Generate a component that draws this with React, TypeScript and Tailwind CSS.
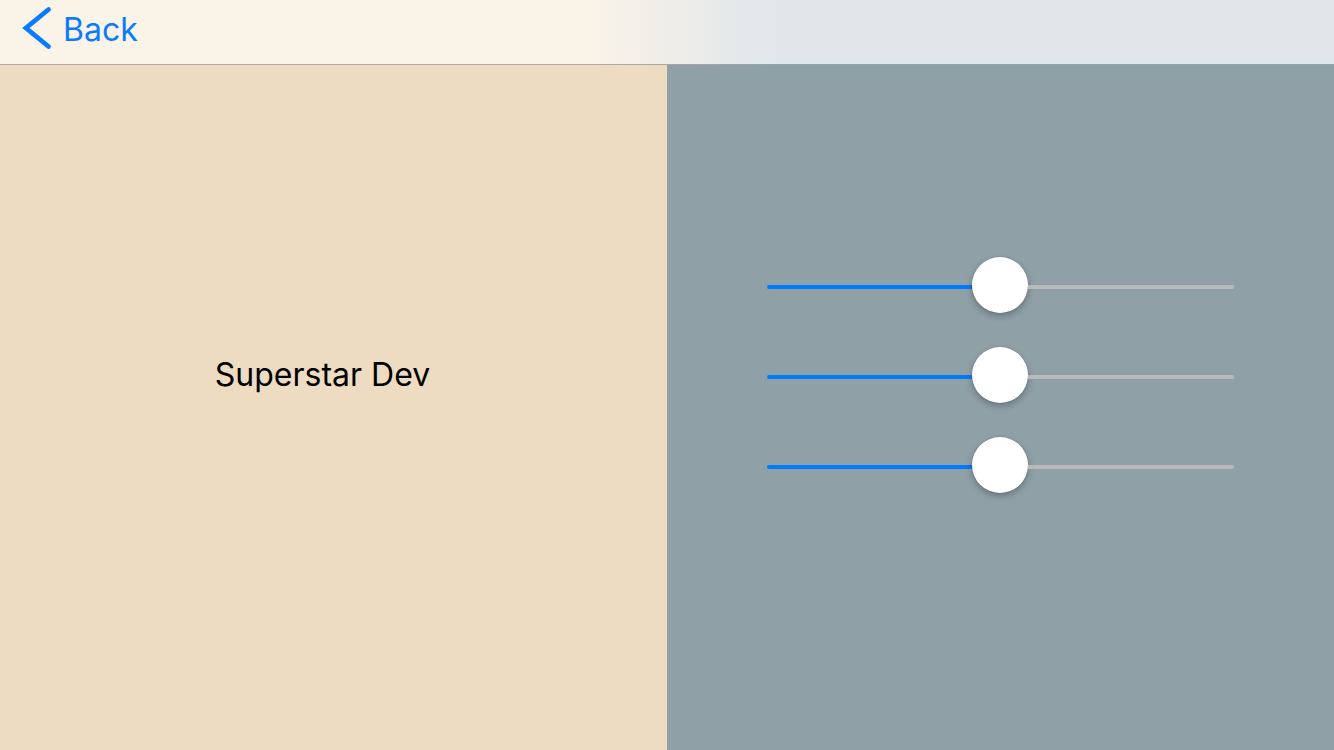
import React from "react";

function Slider({ value }: { value: number }) {
  const trackWidth = 467;
  const thumb = 56;
  const filled = Math.round((trackWidth - thumb) * value) - 1;

  return (
    <div className="flex h-14 w-[467px] items-center">
      <div
        className="mt-[3px] h-[4px] shrink-0 rounded-l-full bg-[#007aff]"
        style={{ width: filled }}
      />
      <div className="h-14 w-14 shrink-0 rounded-full bg-white shadow-[0_3px_7px_rgba(0,0,0,0.28),0_0_0_0.5px_rgba(0,0,0,0.08)]" />
      <div className="mt-[3px] h-[4px] flex-1 rounded-r-full bg-[#b9b9b9]" />
    </div>
  );
}

export default function App() {
  return (
    <div
      className="relative h-[750px] w-[1334px] overflow-hidden"
      style={{ fontFamily: "Inter, 'Noto Sans', sans-serif" }}
    >
      <div className="flex h-full">
        <div className="flex h-full w-[667px] items-center justify-center bg-[#eddcc2] pr-[22px]">
          <span className="text-[32px] leading-none text-black">Superstar Dev</span>
        </div>
        <div className="flex h-full flex-1 flex-col items-center justify-center gap-[34px] bg-[#8fa0a7]">
          <Slider value={0.5} />
          <Slider value={0.5} />
          <Slider value={0.5} />
        </div>
      </div>

      <div className="absolute inset-x-0 top-0 h-[65px] border-b border-black/30 bg-[linear-gradient(to_right,#faf3e8_44%,#e0e6ea_58%)]">
        <div className="flex items-start pl-[22px] text-[#0a7aff]">
          <svg width="30" height="44" viewBox="0 0 30 44" className="mt-[6px] shrink-0">
            <path
              d="M26.5 3.5 L4 22 L26.5 40.5"
              fill="none"
              stroke="#0a7aff"
              strokeWidth="4.8"
              strokeLinecap="round"
              strokeLinejoin="miter"
            />
          </svg>
          <span className="ml-[11px] mt-[14px] text-[32px] leading-none">Back</span>
        </div>
      </div>
    </div>
  );
}
